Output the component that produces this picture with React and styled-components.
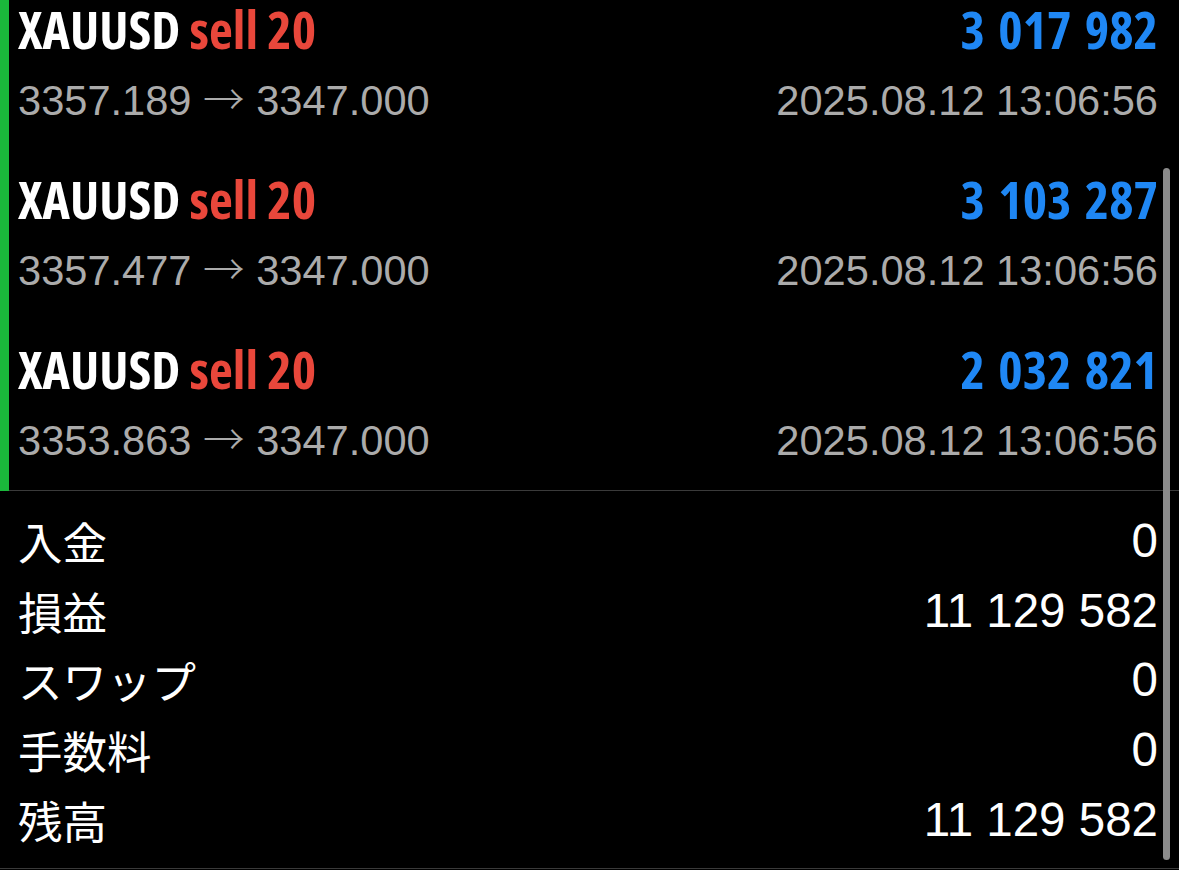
import styled, { createGlobalStyle } from "styled-components";

const GlobalStyle = createGlobalStyle`
  html, body {
    margin: 0;
    background: #000;
  }
  body {
    font-family: "Liberation Sans", "Noto Sans CJK JP", sans-serif;
    color: #fff;
  }
`;

const Screen = styled.div`
  position: relative;
  width: 1179px;
  height: 870px;
  overflow: hidden;
  background: #000;
`;

const TradeList = styled.div`
  margin-top: -20px;
  border-left: 9px solid #1ab83b;
`;

const TradeColumn = styled.div`
  border-bottom: 1px solid #3a3a3a;
`;

const Trade = styled.div`
  height: 170px;
  box-sizing: border-box;
  padding: 19px 21px 0 9px;
  display: flex;
  flex-direction: column;
  gap: 13px;
`;

const Line = styled.div`
  display: flex;
  justify-content: space-between;
  align-items: baseline;
  white-space: nowrap;
`;

const Title = styled.div`
  font-family: "Open Sans", sans-serif;
  font-stretch: 75%;
  font-weight: 700;
  font-size: 52px;
  line-height: 60px;
  color: #fff;
`;

const Side = styled.span`
  color: #e9473b;
`;

const Profit = styled.div`
  font-family: "Open Sans", sans-serif;
  font-stretch: 75%;
  font-weight: 700;
  font-size: 52px;
  line-height: 60px;
  word-spacing: 4px;
  color: ${(p) => (p.loss ? "#e9473b" : "#1f87f4")};
`;

const Sub = styled.div`
  font-family: "Liberation Sans", sans-serif;
  font-size: 41.6px;
  line-height: 50px;
  color: #ababab;
`;

const Arrow = styled.span`
  font-family: "Noto Sans CJK JP", sans-serif;
  font-weight: 300;
`;

const Summary = styled.div`
  padding: 15px 21px 14px 18px;
  border-bottom: 1px solid #3a3a3a;
`;

const SummaryRow = styled.div`
  height: 69.6px;
  display: flex;
  justify-content: space-between;
  align-items: center;
  color: #fff;
`;

const Label = styled.span`
  font-family: "Noto Sans CJK JP", sans-serif;
  font-weight: 400;
  font-size: 44.5px;
`;

const Value = styled.span`
  font-family: "Liberation Sans", sans-serif;
  font-size: 47.5px;
`;

const ScrollThumb = styled.div`
  position: absolute;
  right: 9px;
  top: 168px;
  width: 7px;
  height: 692px;
  border-radius: 4px;
  background: #8b8b8b;
`;

const trades = [
  { symbol: "XAUUSD", side: "sell 20", profit: "3 017 982", open: "3357.189", close: "3347.000", time: "2025.08.12 13:06:56" },
  { symbol: "XAUUSD", side: "sell 20", profit: "3 103 287", open: "3357.477", close: "3347.000", time: "2025.08.12 13:06:56" },
  { symbol: "XAUUSD", side: "sell 20", profit: "2 032 821", open: "3353.863", close: "3347.000", time: "2025.08.12 13:06:56" },
];

const summary = [
  ["入金", "0"],
  ["損益", "11 129 582"],
  ["スワップ", "0"],
  ["手数料", "0"],
  ["残高", "11 129 582"],
];

export default function App() {
  return (
    <>
      <GlobalStyle />
      <Screen>
        <TradeList>
          <TradeColumn>
            {trades.map((t, i) => (
              <Trade key={i}>
                <Line>
                  <Title>
                    {t.symbol} <Side>{t.side}</Side>
                  </Title>
                  <Profit>{t.profit}</Profit>
                </Line>
                <Line>
                  <Sub>
                    {t.open} <Arrow>→</Arrow> {t.close}
                  </Sub>
                  <Sub>{t.time}</Sub>
                </Line>
              </Trade>
            ))}
          </TradeColumn>
        </TradeList>
        <Summary>
          {summary.map(([label, value]) => (
            <SummaryRow key={label}>
              <Label>{label}</Label>
              <Value>{value}</Value>
            </SummaryRow>
          ))}
        </Summary>
        <ScrollThumb />
      </Screen>
    </>
  );
}
